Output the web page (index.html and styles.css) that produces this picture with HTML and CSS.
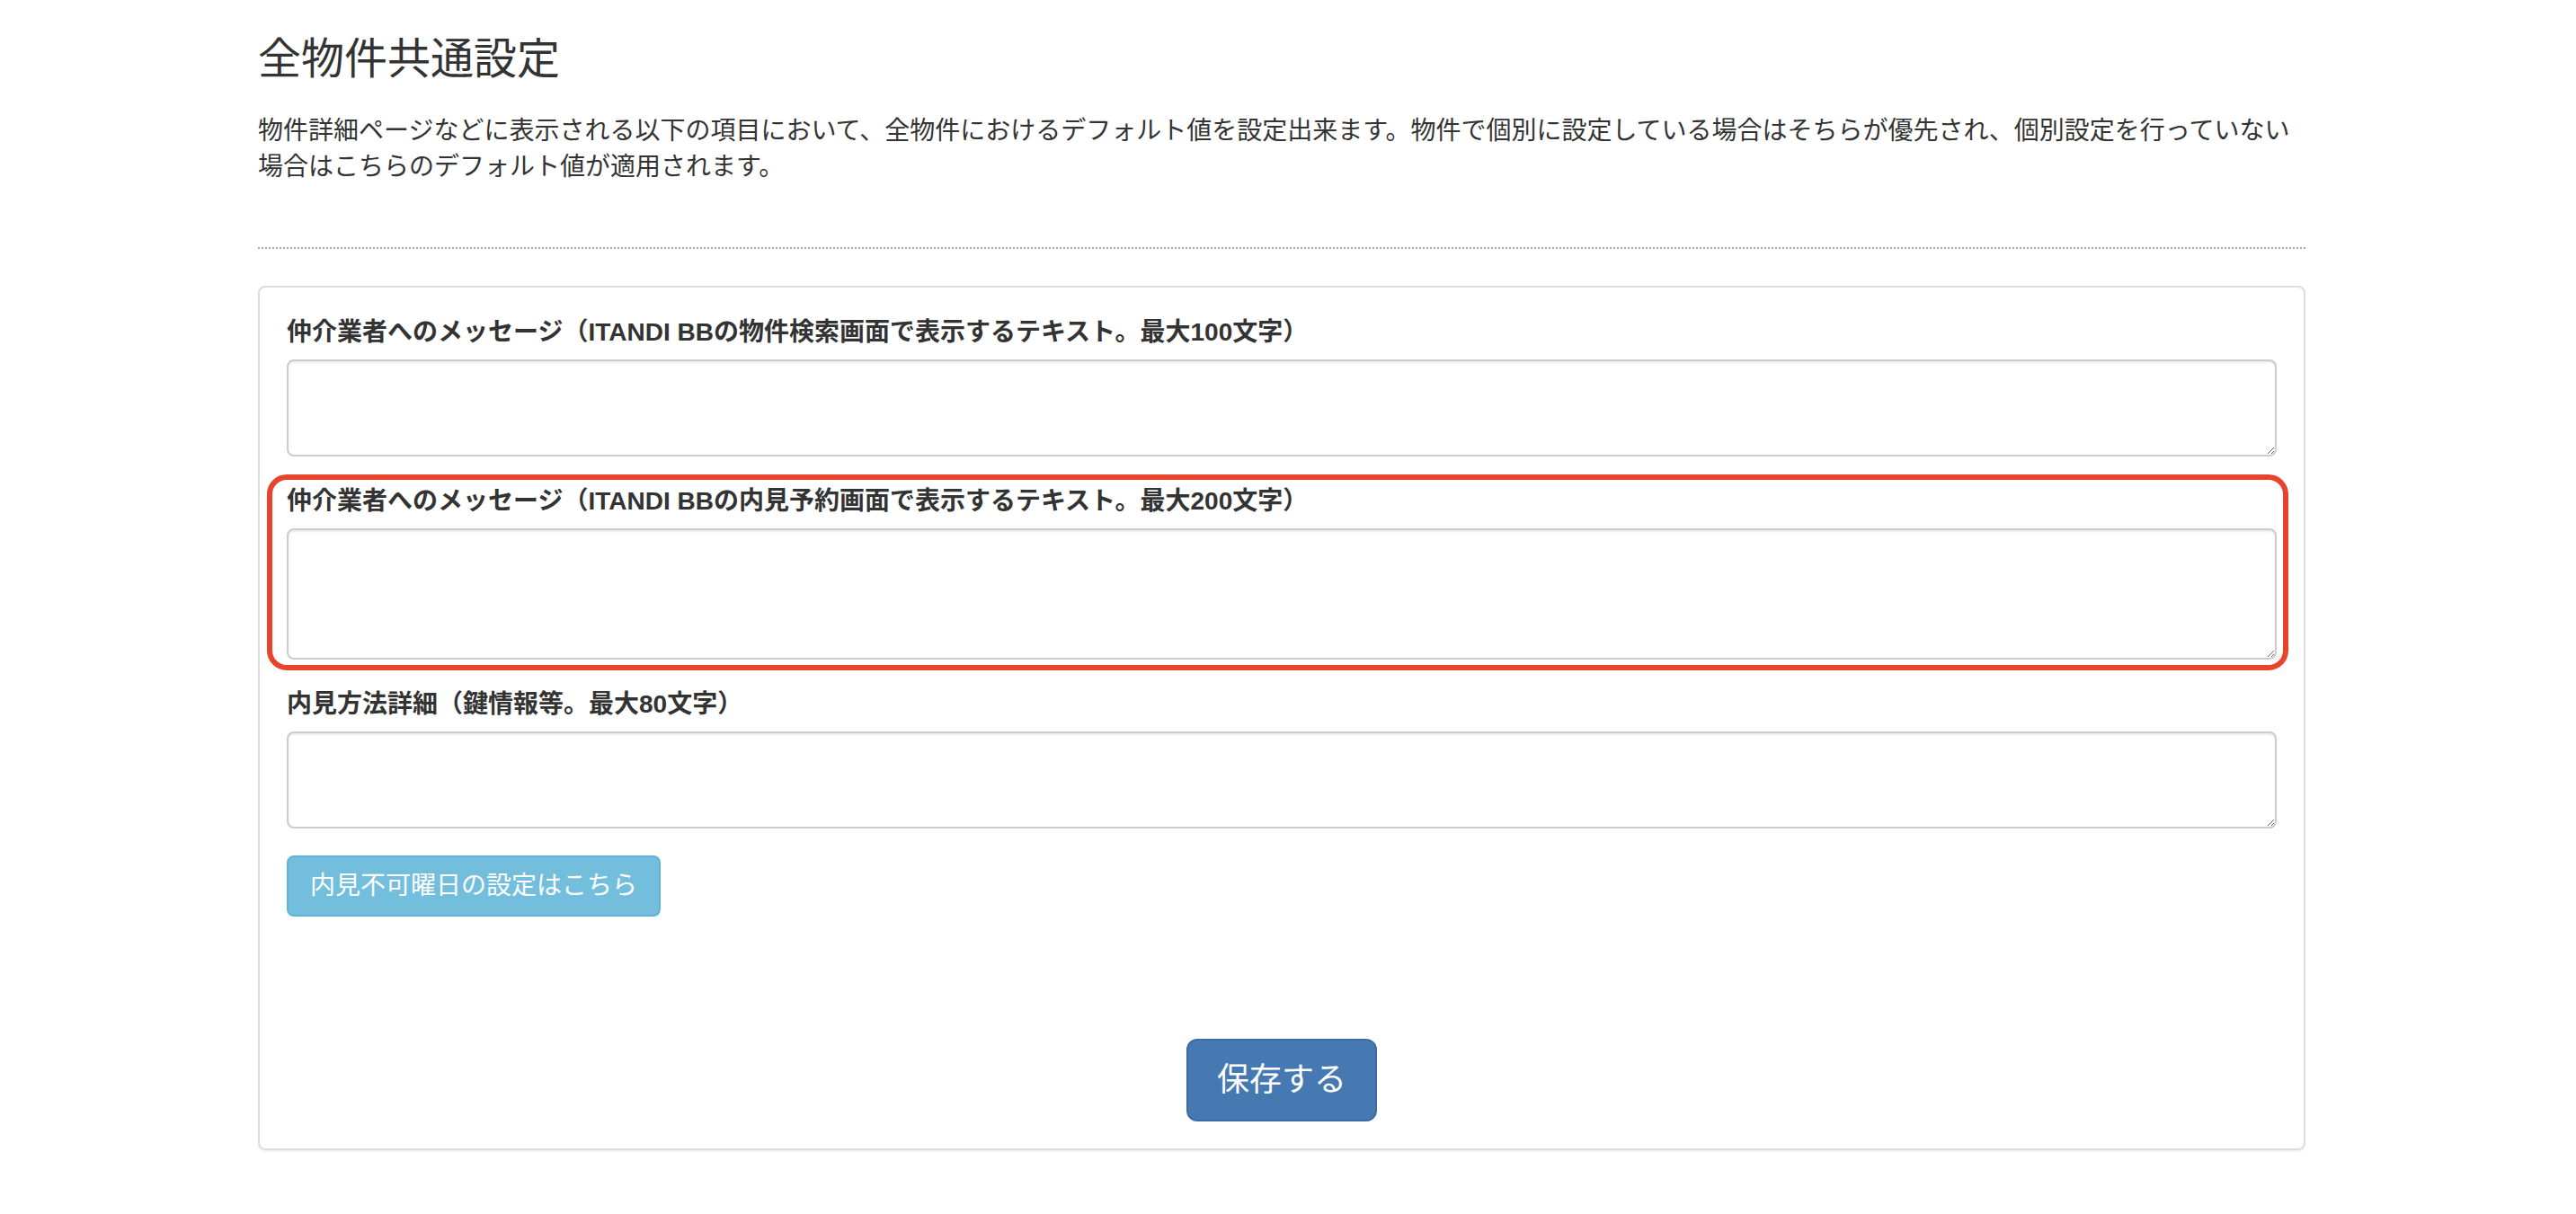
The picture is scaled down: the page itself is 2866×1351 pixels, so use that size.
FILE: index.html
```html
<!DOCTYPE html>
<html>

<head>
    <title>全物件共通設定</title>
    <link rel="stylesheet" href="styles.css">
</head>

<body>
    <div class="container">
        <h3 class="page-title">全物件共通設定</h3>
        <p class="page-desc">物件詳細ページなどに表示される以下の項目において、全物件におけるデフォルト値を設定出来ます。物件で個別に設定している場合はそちらが優先され、個別設定を行っていない場合はこちらのデフォルト値が適用されます。</p>
        <div class="divider"></div>

        <div class="panel">
            <form onsubmit="event.preventDefault()">
                <div class="form-group">
                    <label for="searchMessage">仲介業者へのメッセージ（ITANDI BBの物件検索画面で表示するテキスト。最大100文字）</label>
                    <textarea id="searchMessage" class="form-control rows-2" maxlength="100"></textarea>
                </div>
                <div class="form-group highlight">
                    <label for="reserveMessage">仲介業者へのメッセージ（ITANDI BBの内見予約画面で表示するテキスト。最大200文字）</label>
                    <textarea id="reserveMessage" class="form-control rows-3" maxlength="200"></textarea>
                </div>
                <div class="form-group">
                    <label for="viewingDetail">内見方法詳細（鍵情報等。最大80文字）</label>
                    <textarea id="viewingDetail" class="form-control rows-2" maxlength="80"></textarea>
                </div>
                <div class="form-group">
                    <button type="button" class="btn btn-info">内見不可曜日の設定はこちら</button>
                </div>
                <div class="form-actions">
                    <button type="submit" class="btn btn-primary btn-lg">保存する</button>
                </div>
            </form>
        </div>
    </div>
</body>

</html>
```

FILE: styles.css
```css
body {
    font-family: "Liberation Sans", "Noto Sans CJK JP", sans-serif;
    font-size: 28px;
    line-height: 40px;
    color: #333;
    background-color: #fff;
    margin: 0;
    padding: 0;
}

.container {
    width: 2278px;
    margin: 0 0 0 287px;
    padding-bottom: 60px;
}

.page-title {
    font-size: 48px;
    font-weight: normal;
    line-height: 1.1;
    margin: 40px 0 33px;
}

.page-desc {
    margin: 0;
}

.divider {
    border-top: 2px dotted #a8a8a8;
    margin: 69px 0 41px;
}

.panel {
    border: 2px solid #ddd;
    border-radius: 8px;
    padding: 30px;
    box-shadow: 0 2px 2px rgba(0, 0, 0, 0.05);
}

.form-group {
    margin-bottom: 30px;
}

label {
    display: block;
    font-weight: bold;
    margin-bottom: 10px;
}

.form-control {
    display: block;
    box-sizing: border-box;
    width: 100%;
    padding: 12px 24px;
    font-family: inherit;
    font-size: 28px;
    line-height: 40px;
    color: #555;
    border: 2px solid #ccc;
    border-radius: 8px;
    box-shadow: inset 0 2px 2px rgba(0, 0, 0, 0.075);
    resize: vertical;
}

.rows-2 {
    height: 108px;
}

.rows-3 {
    height: 146px;
}

/* annotation frame round the second field */
.highlight {
    position: relative;
}

.highlight::before {
    content: "";
    position: absolute;
    top: -10px;
    right: -13px;
    bottom: -12px;
    left: -22px;
    border: 6px solid #e8432b;
    border-radius: 22px;
    pointer-events: none;
}

.btn {
    display: inline-block;
    font-family: inherit;
    font-size: 28px;
    line-height: 40px;
    padding: 12px 24px;
    border: 2px solid transparent;
    border-radius: 8px;
    color: #fff;
    cursor: pointer;
}

.btn-info {
    background-color: #74bedd;
    border-color: #60b2d6;
}

.btn-primary {
    background-color: #4679b2;
    border-color: #3d6ca5;
}

.btn-lg {
    font-size: 36px;
    line-height: 48px;
    padding: 20px 32px;
    border-radius: 12px;
}

/* margin collapses with the form-group above */
.form-actions {
    text-align: center;
    margin-top: 136px;
}
```
